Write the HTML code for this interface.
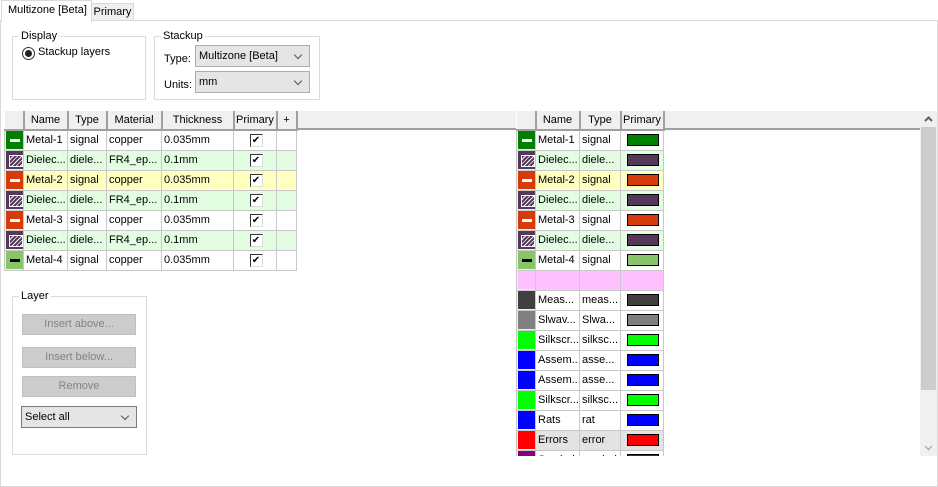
<!DOCTYPE html>
<html><head><style>
*{box-sizing:border-box;margin:0;padding:0}
body{width:938px;height:487px;background:#fff;font-family:"Liberation Sans",sans-serif;font-size:11px;color:#000;position:relative;overflow:hidden}
.a{position:absolute;white-space:nowrap}
.grp{position:absolute;border:1px solid #dcdcdc}
.grp>.lg{position:absolute;top:-8px;left:6px;background:#fff;padding:0 2px;line-height:14px}
.combo{position:absolute;background:#e5e5e5;border:1px solid #adadad;line-height:20px;padding-left:3px;white-space:nowrap}
.combo:after{content:"";position:absolute;right:8px;top:6px;width:5px;height:5px;border-right:1px solid #555;border-bottom:1px solid #555;transform:rotate(45deg)}
.btn{position:absolute;background:#ccc;border:1px solid #bfbfbf;color:#838383;text-align:center;line-height:18px}
table{border-collapse:collapse;table-layout:fixed;position:absolute}
td{border:1px solid #c8c8c8;height:20px;padding:0 0 0 2px;white-space:nowrap;overflow:hidden;line-height:18px}
th{background:#f0f0f0;font-weight:normal;height:19px;border-right:2px solid #a0a0a0;border-left:1px solid #fff;border-bottom:2px solid #a0a0a0;line-height:16px;text-align:center;white-space:nowrap;overflow:hidden}
td.ic{padding:0;border-color:#c8c8c8;background:#f0f0f0}
.i{width:18px;height:18px;margin-left:1px;position:relative}
.m:after{content:"";position:absolute;left:4px;top:8px;width:10px;height:3px;background:#fff}
.m4:after{background:#000}
.d:after{content:"";position:absolute;left:3px;top:4px;width:12px;height:10px;border:1px solid #fff;background:repeating-linear-gradient(135deg,#55375a 0 2px,#fff 2px 3px)}
.g{background:#e3fde3}.y{background:#ffffc0}.p{background:#ffc0ff}.e{background:#e3e3e3}
.cb{display:inline-block;width:13px;height:13px;border:1px solid #333;border-right-color:#ddd;border-bottom-color:#ddd;background:#fff;font-size:10px;line-height:11px;text-align:center;vertical-align:middle}
.sw{display:block;width:32px;height:12px;border:1px solid #000;margin:0 auto}
</style></head><body>
<div class="a" style="left:0;top:20px;width:938px;height:467px;border:1px solid #d9d9d9"></div>
<div class="a" style="left:91px;top:3px;width:43px;height:18px;background:#f0f0f0;border:1px solid #d9d9d9;line-height:17px;text-align:center">Primary</div>
<div class="a" style="left:1px;top:0;width:91px;height:22px;background:#fff;border:1px solid #d9d9d9;border-bottom:none;line-height:18px;padding-left:6px">Multizone [Beta]</div>

<div class="grp" style="left:12px;top:36px;width:134px;height:64px"><span class="lg">Display</span>
<div class="a" style="left:9px;top:10px;width:13px;height:13px;border:1px solid #333;border-radius:50%"><div class="a" style="left:2px;top:2px;width:7px;height:7px;border-radius:50%;background:#222"></div></div>
<div class="a" style="left:25px;top:9px">Stackup layers</div></div>

<div class="grp" style="left:154px;top:36px;width:166px;height:64px"><span class="lg">Stackup</span>
<div class="a" style="left:9px;top:16px">Type:</div>
<div class="a" style="left:9px;top:42px">Units:</div></div>
<div class="combo" style="left:195px;top:45px;width:115px;height:22px">Multizone [Beta]</div>
<div class="combo" style="left:195px;top:71px;width:115px;height:22px">mm</div>

<div class="a" style="left:4px;top:111px;width:512px;height:19px;background:#f0f0f0;border-bottom:2px solid #a0a0a0"></div>
<table style="left:4px;top:111px;width:292px">
<colgroup><col style="width:19px"><col style="width:44px"><col style="width:39px"><col style="width:55px"><col style="width:72px"><col style="width:43px"><col style="width:20px"></colgroup>
<tr><th></th><th>Name</th><th>Type</th><th>Material</th><th>Thickness</th><th>Primary</th><th>+</th></tr>
<tr><td class="ic"><div class="i m" style="background:#008000"></div></td><td>Metal-1</td><td>signal</td><td>copper</td><td>0.035mm</td><td style="text-align:center"><span class="cb">✔</span></td><td></td></tr>
<tr class="g"><td class="ic"><div class="i d" style="background:#55375a"></div></td><td>Dielec...</td><td>diele...</td><td>FR4_ep...</td><td>0.1mm</td><td style="text-align:center"><span class="cb">✔</span></td><td></td></tr>
<tr class="y"><td class="ic"><div class="i m" style="background:#d83b0a"></div></td><td>Metal-2</td><td>signal</td><td>copper</td><td>0.035mm</td><td style="text-align:center"><span class="cb">✔</span></td><td></td></tr>
<tr class="g"><td class="ic"><div class="i d" style="background:#55375a"></div></td><td>Dielec...</td><td>diele...</td><td>FR4_ep...</td><td>0.1mm</td><td style="text-align:center"><span class="cb">✔</span></td><td></td></tr>
<tr><td class="ic"><div class="i m" style="background:#d83b0a"></div></td><td>Metal-3</td><td>signal</td><td>copper</td><td>0.035mm</td><td style="text-align:center"><span class="cb">✔</span></td><td></td></tr>
<tr class="g"><td class="ic"><div class="i d" style="background:#55375a"></div></td><td>Dielec...</td><td>diele...</td><td>FR4_ep...</td><td>0.1mm</td><td style="text-align:center"><span class="cb">✔</span></td><td></td></tr>
<tr><td class="ic"><div class="i m m4" style="background:#88c46a"></div></td><td>Metal-4</td><td>signal</td><td>copper</td><td>0.035mm</td><td style="text-align:center"><span class="cb">✔</span></td><td></td></tr>
</table>

<div class="grp" style="left:12px;top:296px;width:135px;height:159px"><span class="lg">Layer</span></div>
<div class="btn" style="left:22px;top:314px;width:114px;height:21px">Insert above...</div>
<div class="btn" style="left:22px;top:347px;width:114px;height:21px">Insert below...</div>
<div class="btn" style="left:22px;top:376px;width:114px;height:21px">Remove</div>
<div class="combo" style="left:21px;top:406px;width:116px;height:22px;border-color:#7a7a7a">Select all</div>

<div class="a" style="left:516px;top:111px;width:404px;height:345px;overflow:hidden">
<div class="a" style="left:0;top:0;width:404px;height:19px;background:#f0f0f0;border-bottom:2px solid #a0a0a0"></div>
<table style="left:0;top:0;width:147px">
<colgroup><col style="width:19px"><col style="width:44px"><col style="width:41px"><col style="width:43px"></colgroup>
<tr><th></th><th>Name</th><th>Type</th><th>Primary</th></tr>
<tr><td class="ic"><div class="i m" style="background:#008000"></div></td><td>Metal-1</td><td>signal</td><td><span class="sw" style="background:#008000"></span></td></tr>
<tr class="g"><td class="ic"><div class="i d" style="background:#55375a"></div></td><td>Dielec...</td><td>diele...</td><td><span class="sw" style="background:#55375a"></span></td></tr>
<tr class="y"><td class="ic"><div class="i m" style="background:#d83b0a"></div></td><td>Metal-2</td><td>signal</td><td><span class="sw" style="background:#d83b0a"></span></td></tr>
<tr class="g"><td class="ic"><div class="i d" style="background:#55375a"></div></td><td>Dielec...</td><td>diele...</td><td><span class="sw" style="background:#55375a"></span></td></tr>
<tr><td class="ic"><div class="i m" style="background:#d83b0a"></div></td><td>Metal-3</td><td>signal</td><td><span class="sw" style="background:#d83b0a"></span></td></tr>
<tr class="g"><td class="ic"><div class="i d" style="background:#55375a"></div></td><td>Dielec...</td><td>diele...</td><td><span class="sw" style="background:#55375a"></span></td></tr>
<tr><td class="ic"><div class="i m m4" style="background:#88c46a"></div></td><td>Metal-4</td><td>signal</td><td><span class="sw" style="background:#88c46a"></span></td></tr>
<tr class="p"><td class="ic"><div class="i" style="background:#ffc0ff"></div></td><td></td><td></td><td></td></tr>
<tr><td class="ic"><div class="i" style="background:#404040"></div></td><td>Meas...</td><td>meas...</td><td><span class="sw" style="background:#404040"></span></td></tr>
<tr><td class="ic"><div class="i" style="background:#808080"></div></td><td>Slwav...</td><td>Slwa...</td><td><span class="sw" style="background:#808080"></span></td></tr>
<tr><td class="ic"><div class="i" style="background:#00ff00"></div></td><td>Silkscr...</td><td>silksc...</td><td><span class="sw" style="background:#00ff00"></span></td></tr>
<tr><td class="ic"><div class="i" style="background:#0000ff"></div></td><td>Assem...</td><td>asse...</td><td><span class="sw" style="background:#0000ff"></span></td></tr>
<tr><td class="ic"><div class="i" style="background:#0000ff"></div></td><td>Assem...</td><td>asse...</td><td><span class="sw" style="background:#0000ff"></span></td></tr>
<tr><td class="ic"><div class="i" style="background:#00ff00"></div></td><td>Silkscr...</td><td>silksc...</td><td><span class="sw" style="background:#00ff00"></span></td></tr>
<tr><td class="ic"><div class="i" style="background:#0000ff"></div></td><td>Rats</td><td>rat</td><td><span class="sw" style="background:#0000ff"></span></td></tr>
<tr class="e"><td class="ic"><div class="i" style="background:#ff0000"></div></td><td>Errors</td><td>error</td><td><span class="sw" style="background:#ff0000"></span></td></tr>
<tr><td class="ic"><div class="i" style="background:#800080"></div></td><td>Symbol</td><td>symbol</td><td><span class="sw" style="background:#800080"></span></td></tr>
</table></div>
<div class="a" style="left:920px;top:111px;width:17px;height:345px;background:#f0f0f0"></div>
<div class="a" style="left:921px;top:127px;width:15px;height:263px;background:#cdcdcd"></div>
<svg class="a" style="left:920px;top:111px" width="17" height="16"><path d="M5 10 L8.5 6.5 L12 10" fill="none" stroke="#606060" stroke-width="2"/></svg>
<svg class="a" style="left:920px;top:440px" width="17" height="16"><path d="M5 6 L8.5 9.5 L12 6" fill="none" stroke="#a0a0a0" stroke-width="1.2"/></svg>
</body></html>
